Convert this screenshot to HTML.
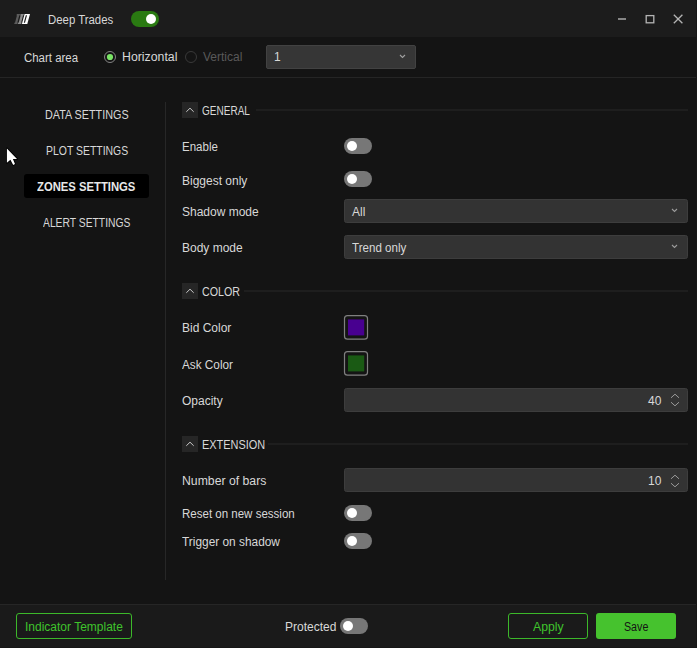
<!DOCTYPE html>
<html><head><meta charset="utf-8">
<style>
*{margin:0;padding:0;box-sizing:border-box}
html,body{width:697px;height:648px;overflow:hidden;background:#141414}
body{position:relative;font-family:"Liberation Sans",sans-serif;font-size:12px;color:#d8d8d8}
.a{position:absolute}
.t{position:absolute;font-size:12px;line-height:14px;white-space:nowrap;transform-origin:0 0;color:#d8d8d8}
.tb{position:absolute;left:0;top:0;width:697px;height:37px;background:#1c1c1c}
.ft{position:absolute;left:0;top:604px;width:697px;height:44px;background:#1a1a1a;border-top:1px solid #262626}
.hl{position:absolute;height:2px;background:#1e1e1e}
.tog{position:absolute;width:28px;height:16px;border-radius:8px;background:#777}
.tog::after{content:"";position:absolute;left:3px;top:3px;width:10px;height:10px;border-radius:50%;background:#fff}
.tog.on{background:#2a7a12}
.tog.on::after{left:15px}
.dd{position:absolute;height:24px;background:#333;border-radius:2.5px;border:1px solid #3d3d3d}
.chev{position:absolute;width:16px;height:16px;background:#262626;left:182px}
.sw{position:absolute;left:344px;width:24px;height:24px;border:1.5px solid #767676;border-radius:3.5px;background:#141414}
.sw i{position:absolute;left:2.5px;top:3px;width:16px;height:16px}
.btn{position:absolute;top:613px;height:26px;border:1px solid #3cb82a;border-radius:3px}
</style></head><body>
<!-- title bar -->
<div class="tb"></div>
<svg class="a" style="left:0;top:0" width="40" height="40">
  <polygon points="14.20,24.00 17.40,24.00 17.83,22.40 17.38,22.40 19.22,15.60 19.67,15.60 20.10,14.00 16.90,14.00 16.47,15.60 16.92,15.60 15.08,22.40 14.63,22.40" fill="#5c5c5c"/>
  <polygon points="17.90,24.00 21.20,24.00 21.63,22.40 21.18,22.40 23.02,15.60 23.47,15.60 23.90,14.00 20.60,14.00 20.17,15.60 20.62,15.60 18.78,22.40 18.33,22.40" fill="#8e8e8e"/>
  <polygon points="21.9,24 27.3,24 30.0,14 24.6,14" fill="#fff"/>
  <polygon points="25.8,15.3 27.0,15.3 25.0,22.8 23.8,22.8" fill="#1c1c1c"/>
</svg>
<div class="t" style="left:48px;top:13px;transform:scaleX(0.949)">Deep Trades</div>
<div class="tog on" style="left:131px;top:11px"></div>
<svg class="a" style="left:610px;top:10px" width="87" height="20">
  <line x1="8" y1="9" x2="16" y2="9" stroke="#b4b4b4" stroke-width="1.4"/>
  <rect x="36.2" y="5.6" width="7.6" height="7.2" fill="none" stroke="#b4b4b4" stroke-width="1.3"/>
  <path d="M63.8 4.8 L72.4 13.2 M72.4 4.8 L63.8 13.2" stroke="#b4b4b4" stroke-width="1.3"/>
</svg>

<!-- chart area row -->
<div class="t" style="left:24px;top:51px;transform:scaleX(0.953)">Chart area</div>
<svg class="a" style="left:104px;top:51px" width="12" height="12"><circle cx="6" cy="6" r="5.5" fill="none" stroke="#858585" stroke-width="1"/><circle cx="6" cy="6" r="3.1" fill="#7ae466"/></svg>
<div class="t" style="left:121.5px;top:50px;transform:scaleX(1.025)">Horizontal</div>
<svg class="a" style="left:185px;top:51px" width="12" height="12"><circle cx="6" cy="6" r="5.5" fill="none" stroke="#3a3a3a" stroke-width="1"/></svg>
<div class="t" style="left:203px;top:50px;color:#595959">Vertical</div>
<div class="dd" style="left:266px;top:45px;width:150px;height:24px;border:1px solid #424242;border-radius:2px;background:#363636"></div>
<div class="t" style="left:274px;top:50px">1</div>
<svg class="a" style="left:399px;top:54px" width="7" height="5"><path d="M1 1 L3.5 3.5 L6 1" fill="none" stroke="#a0a0a0" stroke-width="1.1"/></svg>
<div class="hl" style="left:0;top:77px;width:696px;height:1px;background:#252525"></div>

<!-- left nav -->
<div class="t" style="left:45px;top:108px;transform:scaleX(0.90)">DATA SETTINGS</div>
<div class="t" style="left:46px;top:144px;transform:scaleX(0.87)">PLOT SETTINGS</div>
<div class="a" style="left:24px;top:174px;width:125px;height:24px;background:#000;border-radius:3px"></div>
<div class="t" style="left:37px;top:180px;font-weight:bold;color:#e8e8e8;transform:scaleX(0.94)">ZONES SETTINGS</div>
<div class="t" style="left:43px;top:216px;transform:scaleX(0.86)">ALERT SETTINGS</div>
<!-- cursor -->
<svg class="a" style="left:0;top:140px" width="30" height="30">
  <path d="M6.9 8.4 L6.9 22.8 L10.4 19.7 L13.2 24.9 L15 24 L12.9 18.9 L17 18.9 Z" fill="#fff" stroke="#000" stroke-width="1.8" stroke-linejoin="round" paint-order="stroke"/>
</svg>

<div class="a" style="left:165px;top:102px;width:1px;height:478px;background:#272727"></div>

<!-- GENERAL -->
<div class="chev" style="top:102px"></div>
<svg class="a" style="left:182px;top:102px" width="16" height="16"><path d="M4.3 9.8 L8 6.2 L11.7 9.8" fill="none" stroke="#c8c8c8" stroke-width="1"/></svg>
<div class="t" style="left:202px;top:104px;transform:scaleX(0.836)">GENERAL</div>
<div class="hl" style="left:256px;top:109px;width:432px"></div>
<div class="t" style="left:182px;top:140px;transform:scaleX(0.96)">Enable</div>
<div class="tog" style="left:344px;top:138px"></div>
<div class="t" style="left:182px;top:174px">Biggest only</div>
<div class="tog" style="left:344px;top:171px"></div>
<div class="t" style="left:182px;top:205px">Shadow mode</div>
<div class="dd" style="left:344px;top:199px;width:344px"></div>
<div class="t" style="left:352px;top:205px">All</div>
<svg class="a" style="left:671px;top:208px" width="7" height="5"><path d="M1 1 L3.5 3.5 L6 1" fill="none" stroke="#9c9c9c" stroke-width="1.1"/></svg>
<div class="t" style="left:182px;top:241px">Body mode</div>
<div class="dd" style="left:344px;top:235px;width:344px"></div>
<div class="t" style="left:352px;top:241px;transform:scaleX(0.965)">Trend only</div>
<svg class="a" style="left:671px;top:244px" width="7" height="5"><path d="M1 1 L3.5 3.5 L6 1" fill="none" stroke="#9c9c9c" stroke-width="1.1"/></svg>

<!-- COLOR -->
<div class="chev" style="top:283px"></div>
<svg class="a" style="left:182px;top:283px" width="16" height="16"><path d="M4.3 9.8 L8 6.2 L11.7 9.8" fill="none" stroke="#c8c8c8" stroke-width="1"/></svg>
<div class="t" style="left:202px;top:285px;transform:scaleX(0.89)">COLOR</div>
<div class="hl" style="left:244px;top:290px;width:444px"></div>
<div class="t" style="left:182px;top:321px">Bid Color</div>
<svg class="a" style="left:340px;top:311px" width="32" height="32"><rect x="4.5" y="4.6" width="23" height="23.6" rx="3" fill="#141414" stroke="#808080" stroke-width="1.2"/><rect x="8" y="8.4" width="16.2" height="16" fill="#480090"/></svg>
<div class="t" style="left:182px;top:358px;transform:scaleX(0.98)">Ask Color</div>
<svg class="a" style="left:340px;top:347.3px" width="32" height="32"><rect x="4.5" y="4.6" width="23" height="23.6" rx="3" fill="#141414" stroke="#808080" stroke-width="1.2"/><rect x="8" y="8.4" width="16.2" height="16" fill="#1a5a14"/></svg>
<div class="t" style="left:182px;top:394px">Opacity</div>
<div class="dd" style="left:344px;top:388px;width:344px"></div>
<div class="t" style="left:648px;top:394px">40</div>
<svg class="a" style="left:670px;top:392px" width="10" height="16"><path d="M1 5.8 L5 2.2 L9 5.8 M1 10.2 L5 13.8 L9 10.2" fill="none" stroke="#9a9a9a" stroke-width="1"/></svg>

<!-- EXTENSION -->
<div class="chev" style="top:436px"></div>
<svg class="a" style="left:182px;top:436px" width="16" height="16"><path d="M4.3 9.8 L8 6.2 L11.7 9.8" fill="none" stroke="#c8c8c8" stroke-width="1"/></svg>
<div class="t" style="left:202px;top:438px;transform:scaleX(0.91)">EXTENSION</div>
<div class="hl" style="left:268px;top:443px;width:420px"></div>
<div class="t" style="left:182px;top:474px;transform:scaleX(1.02)">Number of bars</div>
<div class="dd" style="left:344px;top:468px;width:344px"></div>
<div class="t" style="left:648px;top:474px">10</div>
<svg class="a" style="left:670px;top:472.6px" width="10" height="16"><path d="M1 5.8 L5 2.2 L9 5.8 M1 10.2 L5 13.8 L9 10.2" fill="none" stroke="#9a9a9a" stroke-width="1"/></svg>
<div class="t" style="left:182px;top:507px;transform:scaleX(0.96)">Reset on new session</div>
<div class="tog" style="left:344px;top:505px"></div>
<div class="t" style="left:182px;top:535px;transform:scaleX(0.99)">Trigger on shadow</div>
<div class="tog" style="left:344px;top:533px"></div>

<!-- footer -->
<div class="ft"></div>
<div class="btn" style="left:16px;width:116px"></div>
<div class="t" style="left:25px;top:620px;color:#3fc42c">Indicator Template</div>
<div class="t" style="left:285px;top:620px">Protected</div>
<div class="tog" style="left:340px;top:618px"></div>
<div class="btn" style="left:508px;width:80px"></div>
<div class="t" style="left:533px;top:620px;color:#3fc42c;transform:scaleX(1.02)">Apply</div>
<div class="a" style="left:596px;top:613px;width:80px;height:26px;background:#46c22e;border-radius:3px"></div>
<div class="t" style="left:624px;top:620px;color:#141414;transform:scaleX(0.89)">Save</div>
<div class="a" style="left:696px;top:0;width:1px;height:648px;background:#161616"></div>
<div class="a" style="left:0;top:647px;width:697px;height:1px;background:#161616"></div>
</body></html>
